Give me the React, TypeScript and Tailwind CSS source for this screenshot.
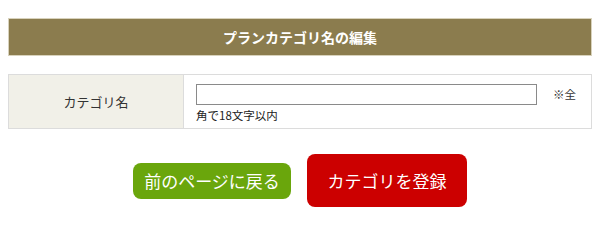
import React from "react";

export default function App() {
  return (
    <div
      className="w-[600px] h-[220px] bg-white pt-[18px] px-[8px]"
      style={{ fontFamily: '"Noto Sans CJK JP", "Noto Sans", sans-serif' }}
    >
      {/* Title bar */}
      <div className="h-[38px] bg-[#8b7c4e] border border-[#d8d2bc] flex items-center justify-center">
        <h2 className="text-white text-[14px] font-bold">プランカテゴリ名の編集</h2>
      </div>

      {/* Form table */}
      <div className="mt-[18px] h-[55px] border border-[#dcdcdc] flex">
        <div className="w-[175px] bg-[#f1f0e8] border-r border-[#dcdcdc] flex items-center justify-center text-[13px] text-[#333]">
          カテゴリ名
        </div>
        <div className="flex-1 flex pl-[12px] pt-[9px]">
          <div className="flex flex-col">
            <input
              type="text"
              className="w-[341px] h-[21px] border border-[#8a8a8a] bg-white outline-none"
            />
            <span className="text-[11.5px] text-[#222] leading-[14px] mt-[3px]">角で18文字以内</span>
          </div>
          <span className="ml-[16px] mt-[2px] text-[11.5px] text-[#333]">※全</span>
        </div>
      </div>

      {/* Buttons */}
      <div className="mt-[25px] flex items-center justify-center gap-[16px]">
        <button className="w-[158px] h-[36px] rounded-[8px] bg-[#6aa60c] text-white text-[17px]">
          前のページに戻る
        </button>
        <button className="w-[160px] h-[53px] rounded-[8px] bg-[#cc0000] text-white text-[17px]">
          カテゴリを登録
        </button>
      </div>
    </div>
  );
}
